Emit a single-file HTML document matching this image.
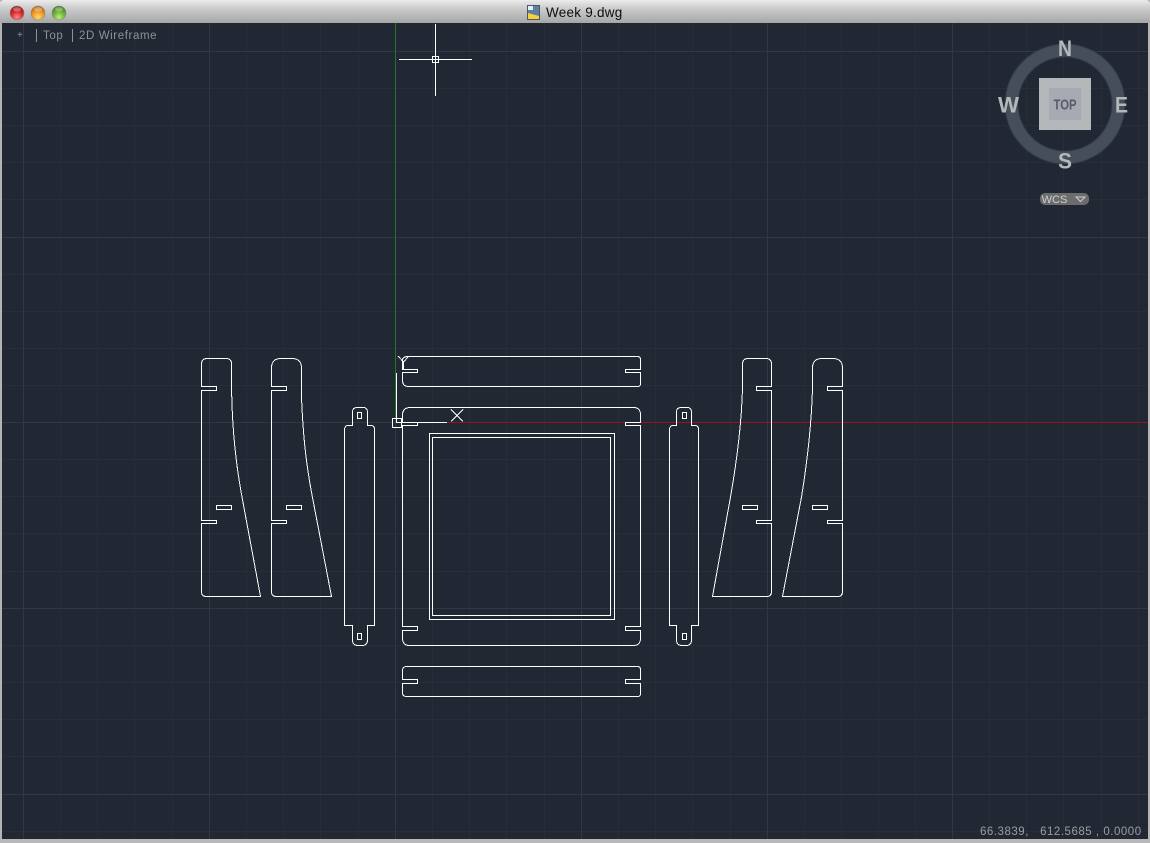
<!DOCTYPE html>
<html>
<head>
<meta charset="utf-8">
<style>
html,body{margin:0;padding:0;background:#b4b4b4;}
body{width:1150px;height:843px;overflow:hidden;position:relative;font-family:"Liberation Sans",sans-serif;}
#bar{position:absolute;left:0;top:0;width:1150px;height:23px;background:linear-gradient(#ececec,#d0d0d0 30%,#a6a6a6);border-radius:4px 4px 0 0;}
#title{position:absolute;left:546px;top:4px;font-size:13.5px;color:#0d0d0d;letter-spacing:.25px;line-height:18px;white-space:nowrap;}
#view{position:absolute;left:2px;top:23px;}
#bot{position:absolute;left:0;top:839px;width:1150px;height:4px;background:#b8b8b8;}
.lbl{position:absolute;color:#8f9296;font-size:11.5px;line-height:14px;white-space:nowrap;letter-spacing:.6px;filter:blur(.3px);}
</style>
</head>
<body>
<div id="bar">
<svg width="1150" height="23" style="position:absolute;left:0;top:0">
<defs>
<radialGradient id="r" cx=".5" cy=".8" r=".75"><stop offset="0" stop-color="#f88"/><stop offset=".55" stop-color="#d92b2f"/><stop offset="1" stop-color="#96171b"/></radialGradient>
<radialGradient id="y" cx=".5" cy=".8" r=".75"><stop offset="0" stop-color="#ffdc68"/><stop offset=".55" stop-color="#ee9a28"/><stop offset="1" stop-color="#b8691a"/></radialGradient>
<radialGradient id="g" cx=".5" cy=".8" r=".75"><stop offset="0" stop-color="#bdf078"/><stop offset=".55" stop-color="#6cb03a"/><stop offset="1" stop-color="#437f24"/></radialGradient>
</defs>
<circle cx="17" cy="13" r="7" fill="url(#r)" stroke="#8a8a8a" stroke-width=".6"/><ellipse cx="17" cy="9.3" rx="4" ry="2.2" fill="#fff" opacity=".3"/>
<circle cx="38" cy="13" r="7" fill="url(#y)" stroke="#8a8a8a" stroke-width=".6"/><ellipse cx="38" cy="9.3" rx="4" ry="2.2" fill="#fff" opacity=".3"/>
<circle cx="59" cy="13" r="7" fill="url(#g)" stroke="#8a8a8a" stroke-width=".6"/><ellipse cx="59" cy="9.3" rx="4" ry="2.2" fill="#fff" opacity=".3"/>
<rect x="527.5" y="5.5" width="12" height="14" fill="#5f7f9e" stroke="#46586a"/>
<path d="M528 13L539 16V19H528Z" fill="#f3d23a"/>
<path d="M528 6h5v4h-5z" fill="#e8eef5"/>
</svg>
<div id="title">Week 9.dwg</div>
</div>
<svg id="view" width="1146" height="816" viewBox="2 23 1146 816" style="background:#212833">
<g stroke="#272e39" stroke-width="1" shape-rendering="crispEdges" fill="none">
<path d="M60.5 23V839M97.5 23V839M134.5 23V839M172.5 23V839M246.5 23V839M283.5 23V839M320.5 23V839M358.5 23V839M432.5 23V839M469.5 23V839M506.5 23V839M544.5 23V839M618.5 23V839M655.5 23V839M692.5 23V839M730.5 23V839M804.5 23V839M841.5 23V839M878.5 23V839M915.5 23V839M989.5 23V839M1026.5 23V839M1063.5 23V839M1101.5 23V839M1138.5 23V839"/>
<path d="M2 88.5H1148M2 125.5H1148M2 162.5H1148M2 199.5H1148M2 274.5H1148M2 311.5H1148M2 348.5H1148M2 385.5H1148M2 459.5H1148M2 496.5H1148M2 533.5H1148M2 571.5H1148M2 645.5H1148M2 682.5H1148M2 719.5H1148M2 756.5H1148M2 831.5H1148"/>
</g>
<g stroke="#313845" stroke-width="1" shape-rendering="crispEdges" fill="none">
<path d="M23.5 23V839M209.5 23V839M395.5 23V839M581.5 23V839M767.5 23V839M952.5 23V839"/>
<path d="M2 51.5H1148M2 237.5H1148M2 422.5H1148M2 608.5H1148M2 794.5H1148"/>
</g>
<path d="M395.5 23V418" stroke="#1f7a1f" stroke-width="1" shape-rendering="crispEdges"/>
<path d="M418 422.5H447" stroke="#a52a2a" stroke-width="1" shape-rendering="crispEdges"/>
<path d="M447 422.5H1148" stroke="#8a1a1f" stroke-width="1" shape-rendering="crispEdges"/>

<!-- compass -->
<circle cx="1065" cy="104" r="53.5" fill="none" stroke="#464e59" stroke-width="13" style="filter:blur(.4px)"/>
<rect x="1039" y="78" width="52" height="52" fill="#b5b8bb"/>
<rect x="1049" y="88" width="32" height="32" fill="#a7aab3"/>
<g style="filter:blur(.35px)" font-family="Liberation Sans" font-weight="bold">
<text x="1053.5" y="109.5" font-size="15" fill="#555b6a" textLength="23" lengthAdjust="spacingAndGlyphs">TOP</text>
<g font-size="22" fill="#b5b8bb">
<text x="1058" y="56" textLength="14" lengthAdjust="spacingAndGlyphs">N</text>
<text x="1058" y="168.5" textLength="14" lengthAdjust="spacingAndGlyphs">S</text>
<text x="998" y="112.5" textLength="21" lengthAdjust="spacingAndGlyphs">W</text>
<text x="1115" y="112.5" textLength="13" lengthAdjust="spacingAndGlyphs">E</text>
</g>
</g>
<rect x="1040" y="193" width="49" height="12" rx="5" fill="#6a6d6c"/>
<text x="1054.5" y="203" font-size="11" fill="#cfd0cf" text-anchor="middle" font-family="Liberation Sans">WCS</text>
<path d="M1076 197H1085L1080.5 201.5Z" fill="none" stroke="#cfd0cf" stroke-width="1"/>

<!-- drawing -->
<g fill="none" stroke="#fff" stroke-width="1" shape-rendering="crispEdges">
<!-- crosshair -->
<path d="M435.5 24V96M399 59.5H472"/>
<rect x="432.5" y="56.5" width="6" height="6"/>
<!-- UCS -->
<path d="M398 356L403.5 362L409 356M403.5 362V369M396.5 373V422.5H402"/>
<rect x="392.5" y="418.5" width="9" height="9"/>
<path d="M402 422.5H447"/>
<path d="M451 409.5L463 421.5M463 409.5L451 421.5"/>
<!-- left 1 -->
<path d="M201.5 386.5H216.5V390.5H201.5V520.5H216.5V523.5H201.5V591.5Q201.5 596.5 206.5 596.5H260.5L242 497C236 465 232.5 430 231.7 395V364Q231.5 358.5 226 358.5H207Q201.5 358.5 201.5 364Z"/>
<rect x="216.5" y="505.5" width="15" height="4"/>
<!-- left 2 -->
<path d="M271.5 386.5H286.5V390.5H271.5V520.5H286.5V523.5H271.5V591.5Q271.5 596.5 276.5 596.5H331.5L312 495C305 458 303 430 301.7 402L301.5 395V368Q301.5 358.5 292 358.5H281Q271.5 358.5 271.5 368Z"/>
<rect x="286.5" y="505.5" width="15" height="4"/>
<!-- tall left -->
<path d="M352.5 425.5V412Q352.5 407.5 357 407.5H363Q367.5 407.5 367.5 412V425.5H371Q374.5 425.5 374.5 429.5V625.5H367.5V640Q367.5 645.5 362 645.5H358Q352.5 645.5 352.5 640V625.5H344.5V430Q344.5 425.5 348 425.5Z"/>
<rect x="357.5" y="412.5" width="4" height="6"/>
<rect x="357.5" y="633.5" width="4" height="6"/>
<!-- tall right -->
<path d="M676.5 425.5V412Q676.5 407.5 681 407.5H687Q691.5 407.5 691.5 412V425.5H695Q698.5 425.5 698.5 429.5V625.5H691.5V640Q691.5 645.5 686 645.5H682Q676.5 645.5 676.5 640V625.5H669.5V430Q669.5 425.5 673 425.5Z"/>
<rect x="682.5" y="412.5" width="4" height="6"/>
<rect x="682.5" y="633.5" width="4" height="6"/>
<!-- top bar -->
<path d="M408.5 356.5H637.5Q640.5 356.5 640.5 359.5V369.5H625.5V372.5H640.5V383.5Q640.5 386.5 637.5 386.5H408.5Q402.5 386.5 402.5 380.5V372.5H417.5V369.5H402.5V360Q402.5 356.5 408.5 356.5Z"/>
<!-- frame -->
<path d="M410.5 407.5H633.5Q640.5 407.5 640.5 415V422.5H625.5V425.5H640.5V626.5H625.5V630.5H640.5V638Q640.5 645.5 633.5 645.5H409.5Q402.5 645.5 402.5 638V630.5H417.5V626.5H402.5V425.5H417.5V422.5H402.5V415Q402.5 407.5 410.5 407.5Z"/>
<rect x="429.5" y="433.5" width="185" height="186"/>
<rect x="432.5" y="437.5" width="178" height="178"/>
<!-- bottom bar -->
<path d="M406.5 666.5H637.5Q640.5 666.5 640.5 669.5V679.5H625.5V683.5H640.5V693.5Q640.5 696.5 637.5 696.5H406.5Q402.5 696.5 402.5 692.5V683.5H417.5V679.5H402.5V670.5Q402.5 666.5 406.5 666.5Z"/>
<!-- right A -->
<path d="M771.5 386.5H756.5V390.5H771.5V520.5H756.5V523.5H771.5V591.5Q771.5 596.5 766.5 596.5H712.5L730.5 497C737 460 741.5 425 742.5 388V364Q742.5 358.5 748 358.5H766Q771.5 358.5 771.5 364Z"/>
<rect x="742.5" y="505.5" width="15" height="4"/>
<!-- right B -->
<path d="M842.5 386.5H827.5V390.5H842.5V520.5H827.5V523.5H842.5V591.5Q842.5 596.5 837.5 596.5H782.5L801.5 497C807.5 460 811.5 425 812.5 388V368Q812.5 358.5 822 358.5H833Q842.5 358.5 842.5 368Z"/>
<rect x="812.5" y="505.5" width="15" height="4"/>
</g>
</svg>
<div id="bot"></div>
<div class="lbl" style="left:17px;top:29px;font-size:10px;">+</div>
<div style="position:absolute;left:36px;top:29px;width:1px;height:13px;background:#8f9296"></div>
<div class="lbl" style="left:43px;top:29px;">Top</div>
<div style="position:absolute;left:72px;top:29px;width:1px;height:13px;background:#8f9296"></div>
<div class="lbl" style="left:79px;top:29px;">2D Wireframe</div>
<div class="lbl" style="left:980px;top:825px;letter-spacing:.52px;color:#9a9da1;">66.3839,&nbsp;&nbsp; 612.5685 , 0.0000</div>
</body>
</html>
